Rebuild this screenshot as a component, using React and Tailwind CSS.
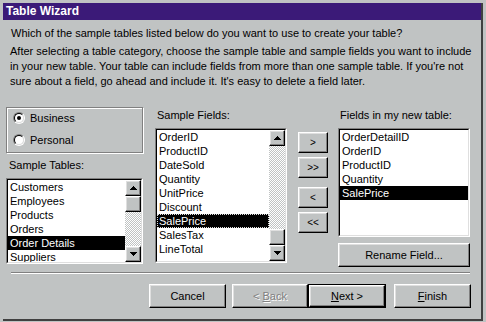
import React from "react";

const raised =
  "border border-t-white border-l-white border-r-black border-b-black shadow-[inset_-1px_-1px_#808080,inset_1px_1px_#dfdfdf] bg-[#c0c3c3]";

function Arrow({ up }) {
  return (
    <svg width="7" height="4" viewBox="0 0 7 4" shapeRendering="crispEdges">
      {up ? (
        <path d="M3 0h1v1h1v1h1v1h1v1H0V3h1V2h1V1h1z" fill="#000" />
      ) : (
        <path d="M0 0h7v1H6v1H5v1H4v1H3V3H2V2H1V1H0z" fill="#000" />
      )}
    </svg>
  );
}

function ScrollBtn({ up }) {
  return (
    <div className={`h-4 w-4 shrink-0 flex items-center justify-center ${raised}`}>
      <Arrow up={up} />
    </div>
  );
}

const dither =
  "bg-[repeating-conic-gradient(#ffffff_0_25%,#c0c3c3_0_50%)] bg-[length:2px_2px]";

function Scrollbar({ thumbAtTop }) {
  return (
    <div className="w-4 flex flex-col shrink-0">
      <ScrollBtn up />
      {thumbAtTop ? (
        <>
          <div className={`h-4 w-4 shrink-0 ${raised}`} />
          <div className={`flex-1 ${dither}`} />
        </>
      ) : (
        <>
          <div className={`flex-1 ${dither}`} />
          <div className={`h-4 w-4 shrink-0 ${raised}`} />
        </>
      )}
      <ScrollBtn />
    </div>
  );
}

function ListBox({ items, selected, className, scroll, thumbAtTop, focus }) {
  return (
    <div
      className={`border border-t-[#808080] border-l-[#808080] border-r-white border-b-white ${className}`}
    >
      <div className="h-full border border-t-black border-l-black border-r-[#dfdfdf] border-b-[#dfdfdf] bg-white flex">
        <div className="flex-1 flex flex-col overflow-hidden">
          {items.map((it) => (
            <div
              key={it}
              className={`h-[14px] leading-[14px] pl-[2px] whitespace-nowrap ${
                it === selected
                  ? `bg-black text-white ${focus ? "outline-1 outline-dotted outline-[#dddddd] -outline-offset-1" : ""}`
                  : ""
              }`}
            >
              {it}
            </div>
          ))}
        </div>
        {scroll && <Scrollbar thumbAtTop={thumbAtTop} />}
      </div>
    </div>
  );
}

function Radio({ checked, label }) {
  return (
    <div className="flex items-center h-[14px]">
      <div className="w-3 h-3 rounded-full border border-t-[#808080] border-l-[#808080] border-r-white border-b-white">
        <div className="w-full h-full rounded-full border border-t-black border-l-black border-r-[#dfdfdf] border-b-[#dfdfdf] bg-white flex items-center justify-center">
          {checked && <div className="w-[4px] h-[4px] rounded-full bg-black" />}
        </div>
      </div>
      <span className="ml-[5px]">{label}</span>
    </div>
  );
}

function SmallBtn({ children }) {
  return (
    <div className={`h-[21px] w-[30px] flex items-center justify-center ${raised}`}>
      <span className="text-[10px] leading-none">{children}</span>
    </div>
  );
}

export default function App() {
  return (
    <div className="w-[486px] h-[322px] bg-[#c0c3c3] pt-[3px] pl-[3px] pr-[3px] pb-[1px] font-['Liberation_Sans',Arial,sans-serif] text-[11px] text-black overflow-hidden">
      <div className="h-full flex flex-col border-r-2 border-b-2 border-[#404040]">
        <div className="h-[17px] bg-[#3b1a78] text-white font-bold text-[12px] leading-[17px] pl-[3px] shrink-0">
          Table Wizard
        </div>
        <div className="mt-[6px] pl-[8px] leading-[14px] whitespace-nowrap">
          Which of the sample tables listed below do you want to use to create your table?
        </div>
        <div className="mt-[4px] pl-[7px] leading-[15px] whitespace-nowrap">
          After selecting a table category, choose the sample table and sample fields you want to include
          <br />
          in your new table. Your table can include fields from more than one sample table. If you're not
          <br />
          sure about a field, go ahead and include it. It's easy to delete a field later.
        </div>

        <div className="mt-[18px] px-[3px] flex h-[160px]">
          {/* left column */}
          <div className="w-[137px] flex flex-col">
            <div className="h-[46px] border border-[#808080] shadow-[inset_1px_1px_#fff,1px_1px_#fff] pl-[6px] pt-[3px] flex flex-col gap-[8px]">
              <Radio checked label="Business" />
              <Radio label="Personal" />
            </div>
            <div className="mt-[5px] leading-[14px] pl-[3px]">Sample Tables:</div>
            <ListBox
              className="mt-[6px] h-[86px]"
              items={["Customers", "Employees", "Products", "Orders", "Order Details", "Suppliers"]}
              selected="Order Details"
              scroll
              thumbAtTop
            />
          </div>

          {/* middle column */}
          <div className="ml-[12px] w-[132px] flex flex-col pt-[1px]">
            <div className="leading-[14px] pl-[2px]">Sample Fields:</div>
            <ListBox
              className="mt-[6px] h-[135px]"
              items={[
                "OrderID",
                "ProductID",
                "DateSold",
                "Quantity",
                "UnitPrice",
                "Discount",
                "SalePrice",
                "SalesTax",
                "LineTotal",
              ]}
              selected="SalePrice"
              scroll
              focus
            />
          </div>

          {/* buttons column */}
          <div className="ml-[11px] w-[30px] flex flex-col pt-[25px]">
            <SmallBtn>&gt;</SmallBtn>
            <div className="mt-[4px]">
              <SmallBtn>&gt;&gt;</SmallBtn>
            </div>
            <div className="mt-[9px]">
              <SmallBtn>&lt;</SmallBtn>
            </div>
            <div className="mt-[4px]">
              <SmallBtn>&lt;&lt;</SmallBtn>
            </div>
          </div>

          {/* right column */}
          <div className="ml-[10px] w-[132px] flex flex-col pt-[1px]">
            <div className="leading-[14px] pl-[2px]">Fields in my new table:</div>
            <ListBox
              className="mt-[6px] h-[109px]"
              items={["OrderDetailID", "OrderID", "ProductID", "Quantity", "SalePrice"]}
              selected="SalePrice"
            />
            <div className={`mt-[6px] h-[24px] flex items-center justify-center ${raised}`}>
              Rename Field...
            </div>
          </div>
        </div>

        <div className="mt-[5px] ml-[8px] mr-[11px] h-[2px] border-t border-t-[#808080] border-b border-b-white" />

        <div className="mt-[10px] flex justify-end pr-[10px]">
          <div className={`w-[77px] h-[24px] flex items-center justify-center ${raised}`}>Cancel</div>
          <div
            className={`ml-[6px] w-[76px] h-[24px] flex items-center justify-center text-[#808080] [text-shadow:1px_1px_0_#fff] ${raised}`}
          >
            &lt; <span className="underline ml-[3px]">B</span>ack
          </div>
          <div className="w-[78px] h-[24px] border border-black">
            <div className={`h-full flex items-center justify-center ${raised}`}>
              <span className="underline">N</span>ext &gt;
            </div>
          </div>
          <div className={`ml-[8px] w-[77px] h-[24px] flex items-center justify-center ${raised}`}>
            <span className="underline">F</span>inish
          </div>
        </div>
      </div>
    </div>
  );
}
